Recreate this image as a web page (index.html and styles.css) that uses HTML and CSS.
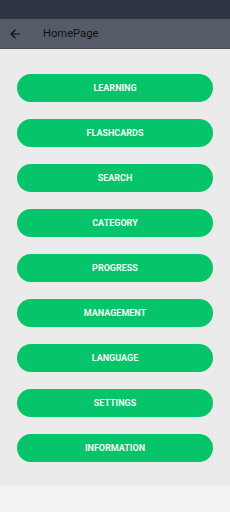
FILE: index.html
```html
<!DOCTYPE html>
<html lang="en">
<head>
    <meta charset="UTF-8">
    <meta name="viewport" content="width=device-width, initial-scale=1.0">
    <title>HomePage</title>
    <link rel="stylesheet" href="styles.css">
</head>
<body>
    <div class="statusBar"></div>
    <header class="appBar">
        <svg class="backIcon" width="14" height="14" viewBox="0 0 24 24">
            <path d="M20 11H7.83l5.59-5.59L12 4l-8 8 8 8 1.41-1.41L7.83 13H20v-2z" fill="#111"/>
        </svg>
        <h1 class="appTitle">HomePage</h1>
    </header>
    <main class="menuList">
        <button class="menuBtn">Learning</button>
        <button class="menuBtn">Flashcards</button>
        <button class="menuBtn">Search</button>
        <button class="menuBtn">Category</button>
        <button class="menuBtn">Progress</button>
        <button class="menuBtn">Management</button>
        <button class="menuBtn">Language</button>
        <button class="menuBtn">Settings</button>
        <button class="menuBtn">Information</button>
    </main>
    <div class="bottomArea"></div>
</body>
</html>
```

FILE: styles.css
```css
*{margin:0;padding:0;box-sizing:border-box;}
html,body{
    width:230px;
    height:512px;
    overflow:hidden;
    background:#f2f2f2;
    font-family:Roboto, "Liberation Sans", sans-serif;
}

.statusBar{
    height:19px;
    background:#2e3442;
}

.appBar{
    height:30px;
    background:#555b67;
    display:flex;
    align-items:center;
    padding-left:8px;
    border-bottom:1px solid #4a505b;
}

.backIcon{
    flex:none;
}

.appTitle{
    margin-left:21px;
    font-size:11.2px;
    font-weight:400;
    color:#111;
}

.menuList{
    height:436px;
    background:#ebebeb;
    display:flex;
    flex-direction:column;
    gap:17px;
    padding:25px 17px 0 17px;
}

.menuBtn{
    height:28px;
    border:none;
    border-radius:14px;
    background:#06c46a;
    color:#f4f4f4;
    font-family:inherit;
    font-size:9px;
    font-weight:700;
    text-transform:uppercase;
}

.bottomArea{
    height:27px;
    background:#f2f2f2;
}
```
